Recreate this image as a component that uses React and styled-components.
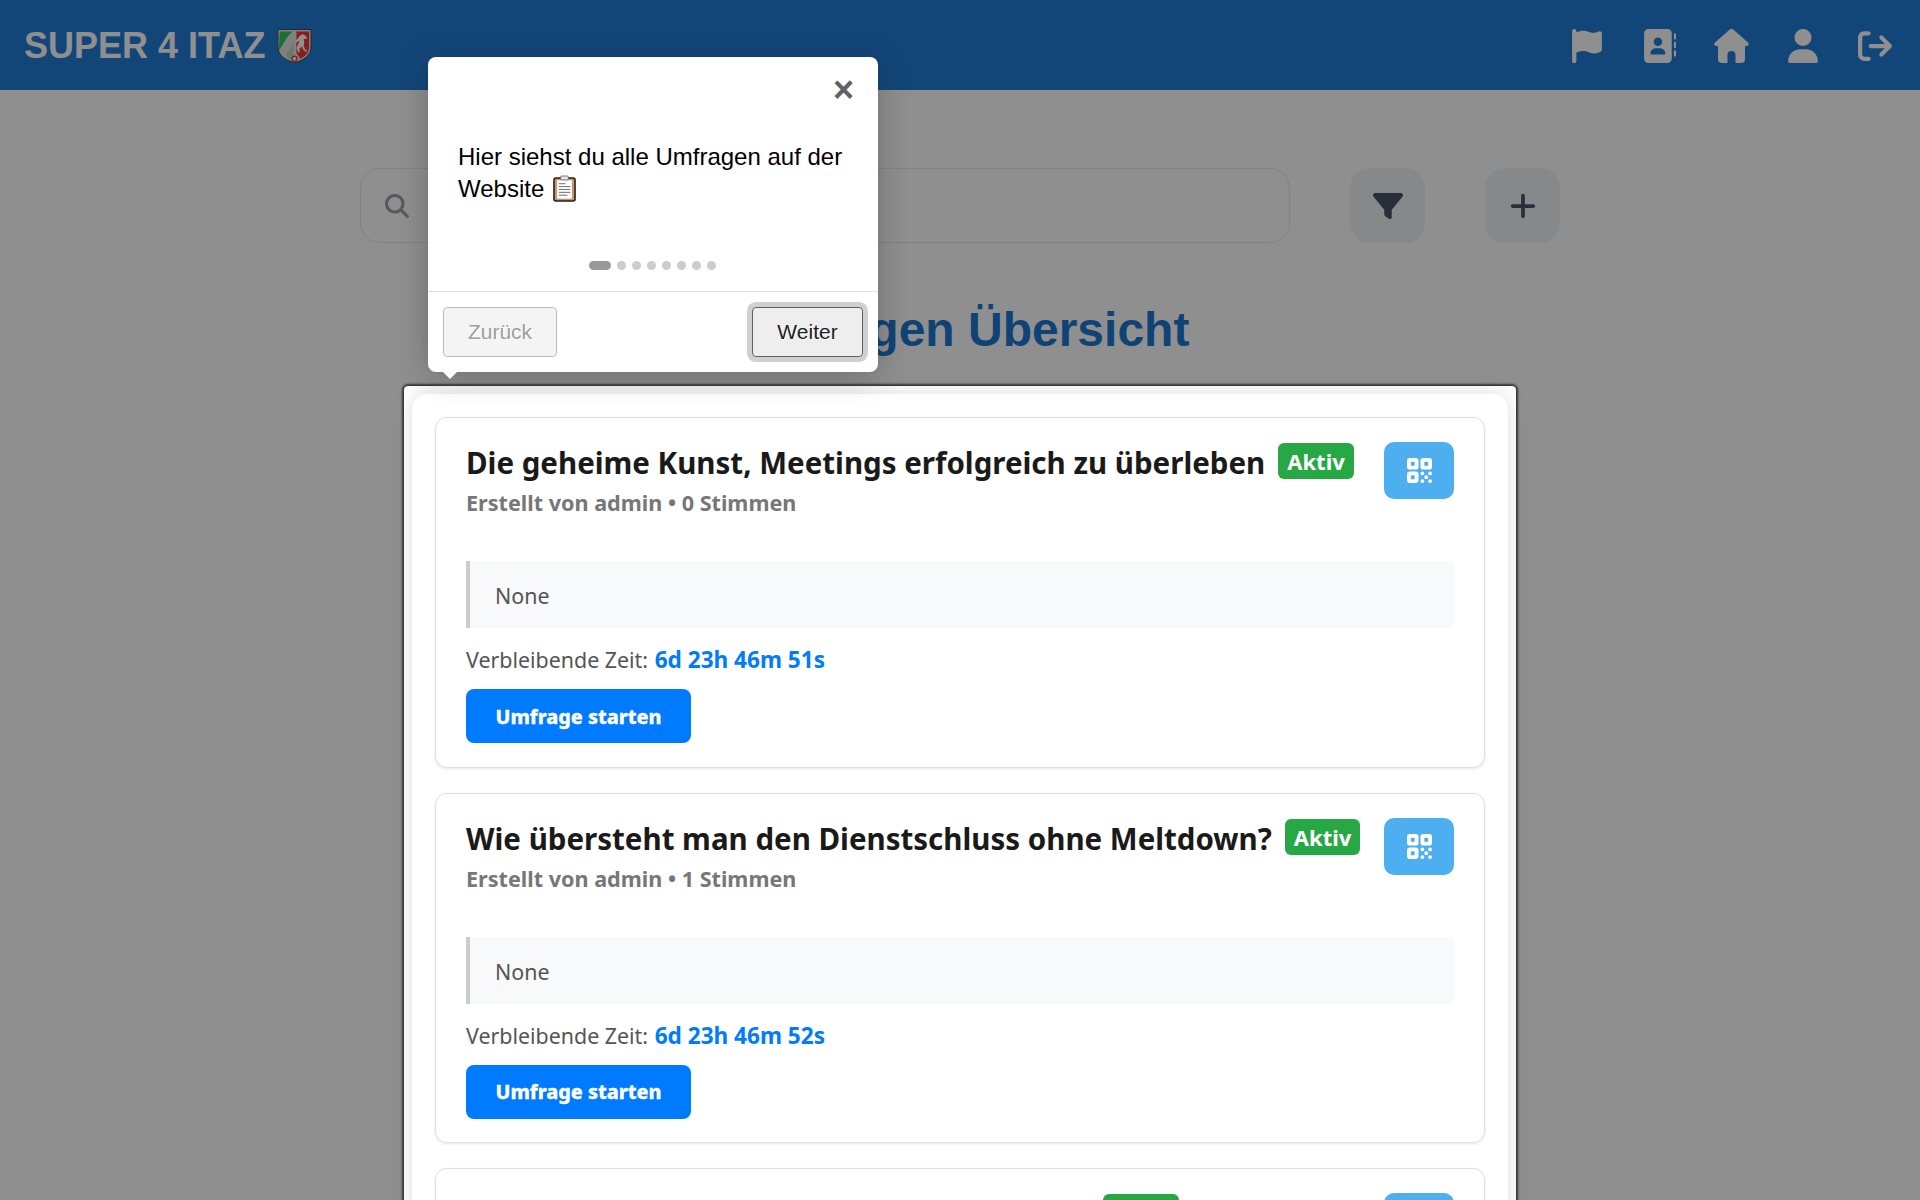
import styled, { createGlobalStyle } from "styled-components";
import {
  FaFlag,
  FaAddressBook,
  FaUser,
  FaArrowRightFromBracket,
  FaMagnifyingGlass,
  FaFilter,
  FaPlus,
} from "react-icons/fa6";

const GlobalStyle = createGlobalStyle`
  html, body {
    margin: 0;
    height: 1200px;
    overflow: hidden;
    background: #fff;
    font-family: "Liberation Sans", Arial, sans-serif;
  }
  * { box-sizing: border-box; }
`;

const Page = styled.div`
  position: relative;
  width: 1920px;
  height: 1200px;
  overflow: hidden;
`;

const Header = styled.header`
  height: 90px;
  display: flex;
  align-items: center;
  justify-content: space-between;
  padding: 0 9px 0 24px;
  background: #207dd6;
`;

const Brand = styled.div`
  display: flex;
  align-items: center;
  gap: 12px;
  color: #fff;
  font-size: 36px;
  font-weight: 700;
  padding-top: 2px;
`;

const Nav = styled.nav`
  display: flex;
`;

const NavLink = styled.a`
  width: 72px;
  height: 90px;
  padding-top: 2px;
  display: flex;
  align-items: center;
  justify-content: center;
  color: #fff;
  font-size: 34px;
`;

const Toolbar = styled.div`
  width: 1200px;
  margin: 78px auto 0;
  display: flex;
  gap: 60px;
`;

const SearchBox = styled.div`
  flex: 1;
  height: 75px;
  display: flex;
  align-items: center;
  padding-left: 24px;
  background: #fff;
  border: 1px solid #e2e8f0;
  border-radius: 20px;
  color: #98a1ae;
  font-size: 24px;
`;

const ToolButton = styled.button`
  width: 75px;
  height: 75px;
  display: flex;
  align-items: center;
  justify-content: center;
  background: #f1f3f6;
  border: 0;
  border-radius: 20px;
  color: #4a5568;
  font-size: 30px;
`;

const PageTitle = styled.h1`
  margin: 59px 0 36px;
  text-align: center;
  font-size: 48px;
  line-height: 56px;
  font-weight: 700;
  color: #1c78d2;
`;

const ListWrap = styled.div`
  position: relative;
  width: 1096px;
  margin: 0 auto;
`;

const Spotlight = styled.div`
  position: absolute;
  inset: -8px;
  z-index: 10;
  border-radius: 4px;
  pointer-events: none;
  box-shadow: rgba(33, 33, 33, 0.8) 0 0 2px 2px, rgba(0, 0, 0, 0.44) 0 0 0 5000px;
`;

const List = styled.div`
  display: flex;
  flex-direction: column;
  gap: 25px;
  padding: 23px;
  background: #fff;
  border-radius: 15px;
  box-shadow: 0 0 20px rgba(0, 0, 0, 0.14);
  font-family: "Noto Sans", "Open Sans", sans-serif;
`;

const Card = styled.article`
  height: 350.5px;
  padding: 24px 30px 0;
  background: #fff;
  border: 1px solid #e0e0e0;
  border-radius: 12px;
  box-shadow: 0 1px 3px rgba(0, 0, 0, 0.1);
`;

const CardHead = styled.div`
  display: flex;
  justify-content: space-between;
  align-items: flex-start;
  height: 119px;
`;

const TitleRow = styled.div`
  display: flex;
  align-items: flex-start;
  gap: 13px;
`;

const CardTitle = styled.h2`
  margin: 1px 0 0;
  font-size: 29.5px;
  line-height: 40px;
  font-weight: 700;
  color: #1a1a1a;
`;

const Badge = styled.span`
  height: 36px;
  margin-top: 1px;
  padding: 0 9px;
  display: flex;
  align-items: center;
  background: #28a745;
  border-radius: 6px;
  color: #fff;
  font-size: 22px;
  font-weight: 700;
`;

const Meta = styled.div`
  margin-top: 5px;
  font-size: 21.6px;
  line-height: 30px;
  font-weight: 700;
  color: #777;
`;

const QrButton = styled.button`
  width: 70px;
  height: 57px;
  display: flex;
  align-items: center;
  justify-content: center;
  padding: 0;
  background: #4dafef;
  border: 0;
  border-radius: 10px;
`;

const Description = styled.div`
  height: 67px;
  display: flex;
  align-items: center;
  padding: 2px 0 0 25px;
  background: #f8f9fa;
  border-left: 4px solid #ccc;
  font-size: 21.4px;
  color: #555;
`;

const TimeRow = styled.div`
  margin-top: 17px;
  font-size: 21.4px;
  line-height: 30px;
  color: #555;
`;

const TimeValue = styled.strong`
  margin-left: 1px;
  color: #007bff;
  font-size: 22.6px;
  font-weight: 700;
`;

const StartButton = styled.button`
  display: block;
  width: 225px;
  height: 54px;
  margin-top: 14px;
  padding: 0;
  background: #007bff;
  border: 0;
  border-radius: 8px;
  color: #fff;
  font-family: inherit;
  font-size: 19.7px;
  font-weight: 800;
  -webkit-text-stroke: 0.3px #fff;
`;

const Tooltip = styled.div`
  position: absolute;
  top: 57px;
  left: 428px;
  z-index: 11;
  width: 450px;
  height: 315px;
  background: #fff;
  border-radius: 8px;
  box-shadow: 0 3px 30px rgba(33, 33, 33, 0.3);
  color: #000;
`;

const Arrow = styled.span`
  position: absolute;
  left: 15px;
  bottom: -7px;
  border-top: 7px solid #fff;
  border-left: 7px solid transparent;
  border-right: 7px solid transparent;
`;

const TooltipHead = styled.div`
  height: 40px;
  padding: 0 24px 0 0;
  display: flex;
  justify-content: flex-end;
`;

const CloseBtn = styled.span`
  margin-top: 15px;
  font-size: 36px;
  line-height: 36px;
  font-weight: 700;
  color: #616161;
`;

const TooltipText = styled.div`
  height: 135px;
  padding: 44px 30px 0;
  font-size: 24px;
  line-height: 32px;
`;

const Bullets = styled.div`
  height: 59px;
  padding: 29px 2px 0 0;
  display: flex;
  justify-content: center;
  gap: 6px;
`;

const Bullet = styled.span`
  width: ${(props) => (props.$active ? "22px" : "9px")};
  height: 9px;
  border-radius: 5px;
  background: ${(props) => (props.$active ? "#999" : "#ccc")};
`;

const TooltipFooter = styled.div`
  height: 81px;
  padding: 15px 15px 0;
  display: flex;
  justify-content: space-between;
  border-top: 1px solid #e0e0e0;
`;

const TourButton = styled.button`
  width: ${(props) => (props.$next ? "111px" : "114px")};
  height: 50px;
  padding: 0;
  background: ${(props) => (props.$next ? "#eee" : "#f4f4f4")};
  border: 1px solid ${(props) => (props.$next ? "#616161" : "#bdbdbd")};
  border-radius: 4px;
  color: ${(props) => (props.$next ? "#212121" : "#9e9e9e")};
  font-family: inherit;
  font-size: 21px;
  text-shadow: 1px 1px 0 #fff;
  box-shadow: ${(props) => (props.$next ? "0 0 0 5px #d0d0d0" : "none")};
`;

const polls = [
  { title: "Die geheime Kunst, Meetings erfolgreich zu überleben", votes: 0, time: "6d 23h 46m 51s" },
  { title: "Wie übersteht man den Dienstschluss ohne Meltdown?", votes: 1, time: "6d 23h 46m 52s" },
  { title: "Was hilft wirklich gegen den Montagfrust?", votes: 0, time: "6d 23h 46m 53s" },
];

function NrwLogo() {
  return (
    <svg width="35" height="36" viewBox="0 0 36 36">
      <path d="M1 1h34v18c0 8-7 14-17 16C8 33 1 27 1 19z" fill="#e4e4e4" stroke="#444" strokeWidth="1" />
      <path d="M3 3h13c-5 4-8 10-11 15-1 2-2 3-2.500 4-.3-1-.5-2-.5-3z" fill="#32c45e" />
      <path d="M17 13c-2 5-5 10-8 15 2 2 4 3 5 4l3-2z" fill="#b9d8c0" />
      <path d="M20 3h13v16c0 6-4 10-9 12l-4-6z" fill="#f23434" />
      <path d="M24 7l3-1 3 2 1 3-2-.5-1.500.5.500 3-.5 4 2 4 1.500 1-1 1.500-3.500-3.500-.5-2.500-3 2 .5 4-1.500.5-2-5 2-4 1-4-2.500 2.500-1.500-1.500z" fill="#fff" />
      <circle cx="18" cy="31" r="2.500" fill="#fff" stroke="#e04444" strokeWidth="1.400" />
    </svg>
  );
}

function HouseIcon() {
  return (
    <svg width="35" height="34" viewBox="0 0 35 34" fill="#fff">
      <path d="M15.500.8a3 3 0 0 1 4 0l14.500 12.700c1.500 1.300.6 3.500-1.300 3.500H31v13a4 4 0 0 1-4 4h-5.500v-8a4 4 0 0 0-8 0v8H8a4 4 0 0 1-4-4V17H2.300C.4 17-.5 14.800 1 13.500z" />
    </svg>
  );
}

function QrIcon() {
  return (
    <svg width="25" height="25" viewBox="0 0 26 26" fill="#fff" fillRule="evenodd">
      <path d="M3 0h6a3 3 0 0 1 3 3v6a3 3 0 0 1-3 3H3a3 3 0 0 1-3-3V3a3 3 0 0 1 3-3zm1.500 4a.5.5 0 0 0-.5.500v3a.5.5 0 0 0 .5.500h3a.5.5 0 0 0 .5-.5v-3a.5.5 0 0 0-.5-.5z" />
      <path d="M17 0h6a3 3 0 0 1 3 3v6a3 3 0 0 1-3 3h-6a3 3 0 0 1-3-3V3a3 3 0 0 1 3-3zm1.500 4a.5.5 0 0 0-.5.500v3a.5.5 0 0 0 .5.500h3a.5.5 0 0 0 .5-.5v-3a.5.5 0 0 0-.5-.5z" />
      <path d="M3 14h6a3 3 0 0 1 3 3v6a3 3 0 0 1-3 3H3a3 3 0 0 1-3-3v-6a3 3 0 0 1 3-3zm1.500 4a.5.5 0 0 0-.5.500v3a.5.5 0 0 0 .5.500h3a.5.5 0 0 0 .5-.5v-3a.5.5 0 0 0-.5-.5z" />
      <circle cx="16" cy="16" r="2" />
      <circle cx="24" cy="16" r="2" />
      <circle cx="20" cy="20" r="2" />
      <circle cx="16" cy="24" r="2" />
      <circle cx="24" cy="24" r="2" />
    </svg>
  );
}

function ClipboardIcon() {
  return (
    <svg width="23" height="27" viewBox="0 0 24 28" style={{ verticalAlign: "-5px", marginLeft: "2px" }}>
      <rect x="1" y="3" width="22" height="24" rx="2" fill="#c9986a" stroke="#2b1a0c" strokeWidth="1.600" />
      <rect x="4" y="5" width="16" height="20" fill="#fff" stroke="#9a8a78" strokeWidth="0.600" />
      <rect x="8" y="1" width="8" height="4" rx="1" fill="#e8e8e8" stroke="#555" strokeWidth="0.800" />
      <path d="M6 9h7M6 12h12M6 15h12M6 18h12M6 21h9" stroke="#666" strokeWidth="1" />
    </svg>
  );
}

function PollCard({ poll }) {
  return (
    <Card>
      <CardHead>
        <div>
          <TitleRow>
            <CardTitle>{poll.title}</CardTitle>
            <Badge>Aktiv</Badge>
          </TitleRow>
          <Meta>Erstellt von admin • {poll.votes} Stimmen</Meta>
        </div>
        <QrButton>
          <QrIcon />
        </QrButton>
      </CardHead>
      <Description>None</Description>
      <TimeRow>
        Verbleibende Zeit: <TimeValue>{poll.time}</TimeValue>
      </TimeRow>
      <StartButton>Umfrage starten</StartButton>
    </Card>
  );
}

export default function App() {
  return (
    <Page>
      <GlobalStyle />
      <Header>
        <Brand>
          SUPER 4 ITAZ
          <NrwLogo />
        </Brand>
        <Nav>
          <NavLink><FaFlag /></NavLink>
          <NavLink><FaAddressBook /></NavLink>
          <NavLink><HouseIcon /></NavLink>
          <NavLink><FaUser /></NavLink>
          <NavLink><FaArrowRightFromBracket /></NavLink>
        </Nav>
      </Header>
      <Toolbar>
        <SearchBox><FaMagnifyingGlass /></SearchBox>
        <ToolButton><FaFilter /></ToolButton>
        <ToolButton><FaPlus /></ToolButton>
      </Toolbar>
      <PageTitle>Umfragen Übersicht</PageTitle>
      <ListWrap>
        <List>
          {polls.map((poll) => (
            <PollCard key={poll.title} poll={poll} />
          ))}
        </List>
        <Spotlight />
      </ListWrap>
      <Tooltip>
        <TooltipHead>
          <CloseBtn>×</CloseBtn>
        </TooltipHead>
        <TooltipText>
          Hier siehst du alle Umfragen auf der Website <ClipboardIcon />
        </TooltipText>
        <Bullets>
          <Bullet $active />
          {[1, 2, 3, 4, 5, 6, 7].map((n) => (
            <Bullet key={n} />
          ))}
        </Bullets>
        <TooltipFooter>
          <TourButton>Zurück</TourButton>
          <TourButton $next>Weiter</TourButton>
        </TooltipFooter>
        <Arrow />
      </Tooltip>
    </Page>
  );
}
